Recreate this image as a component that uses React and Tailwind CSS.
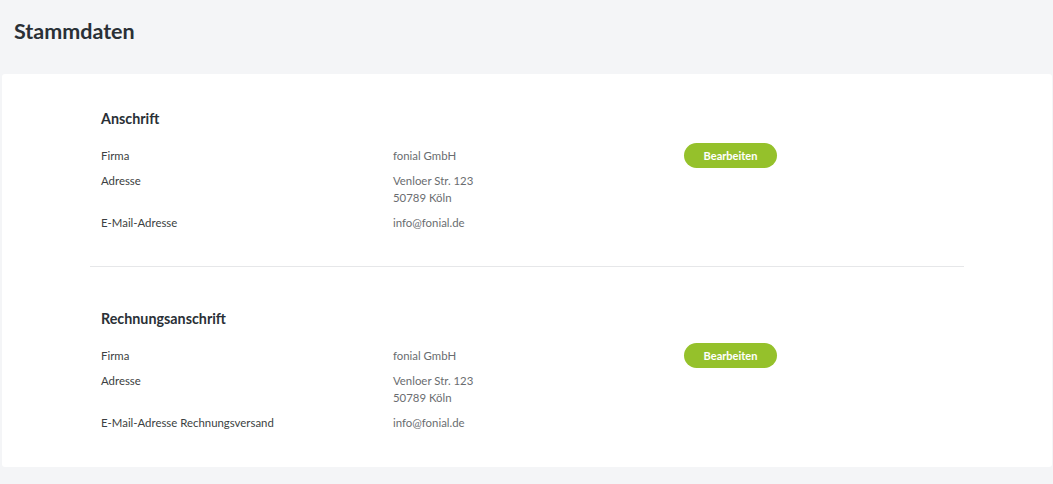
export default function App() {
  const sections = [
    {
      title: "Anschrift",
      rows: [
        ["Firma", ["fonial GmbH"], true],
        ["Adresse", ["Venloer Str. 123", "50789 Köln"]],
        ["E-Mail-Adresse", ["info@fonial.de"]],
      ],
    },
    {
      title: "Rechnungsanschrift",
      rows: [
        ["Firma", ["fonial GmbH"], true],
        ["Adresse", ["Venloer Str. 123", "50789 Köln"]],
        ["E-Mail-Adresse Rechnungsversand", ["info@fonial.de"]],
      ],
    },
  ];
  return (
    <div className="min-h-[484px] bg-[#f4f5f7] pb-[17px]" style={{ fontFamily: "Lato, 'Open Sans', sans-serif" }}>
      <div className="h-[74px] pl-[14px] pt-[18px]">
        <h1 className="text-[21.5px] leading-[26px] font-bold text-[#2a3036]">Stammdaten</h1>
      </div>
      <div className="ml-[2px] mr-[1px] bg-white rounded-[3px]">
        {sections.map((s, i) => (
          <div
            key={s.title}
            className={
              "mx-[88px] px-[11px] " +
              (i === 0 ? "pt-[35px] pb-[35px] border-b border-[#e6e7e9]" : "pt-[42px] pb-[36px]")
            }
          >
            <h2 className="text-[14.3px] leading-[20px] font-bold text-[#2a3036]">{s.title}</h2>
            <div className="mt-[18px] flex flex-col gap-[8px]">
              {s.rows.map(([label, vals, btn]) => (
                <div key={label} className="grid grid-cols-[292px_291px_1fr] text-[11.4px] leading-[17px]">
                  <div className="text-[#3c3f42]">{label}</div>
                  <div className="text-[#6a6d70]">
                    {vals.map((v) => (
                      <div key={v}>{v}</div>
                    ))}
                  </div>
                  <div>
                    {btn && (
                      <button className="-my-[4px] h-[25px] w-[93px] rounded-full bg-[#95c12b] text-white text-[11px] font-bold">
                        Bearbeiten
                      </button>
                    )}
                  </div>
                </div>
              ))}
            </div>
          </div>
        ))}
      </div>
    </div>
  );
}
